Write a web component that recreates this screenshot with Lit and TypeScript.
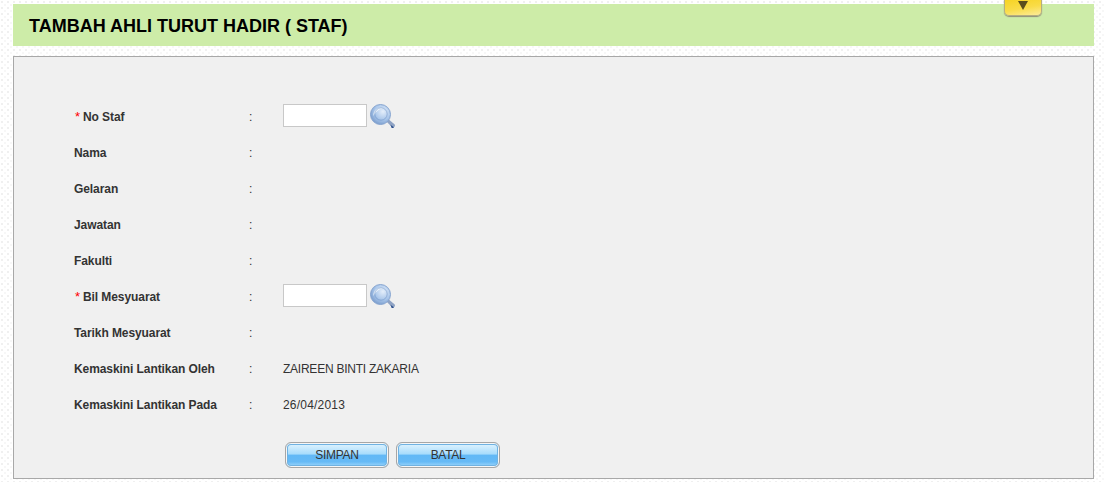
import { LitElement, html, css } from "lit";
import { customElement } from "lit/decorators.js";

const rows = [
  { label: "No Staf", required: true, lookup: true },
  { label: "Nama" },
  { label: "Gelaran" },
  { label: "Jawatan" },
  { label: "Fakulti" },
  { label: "Bil Mesyuarat", required: true, lookup: true },
  { label: "Tarikh Mesyuarat" },
  { label: "Kemaskini Lantikan Oleh", value: "ZAIREEN BINTI ZAKARIA" },
  { label: "Kemaskini Lantikan Pada", value: "26/04/2013", date: true },
] as { label: string; required?: boolean; lookup?: boolean; value?: string; date?: boolean }[];

const searchIcon = html`<svg class="icon" width="28" height="28" viewBox="0 0 28 28">
  <defs>
    <radialGradient id="lens" cx="0.62" cy="0.35" r="0.75">
      <stop offset="0" stop-color="#e4eefa"></stop>
      <stop offset="0.55" stop-color="#a9c6ea"></stop>
      <stop offset="1" stop-color="#6f93c6"></stop>
    </radialGradient>
  </defs>
  <path d="M16 17l2-2 7.5 6.2c.8.8.6 2-.2 2.7-.8.7-1.8.7-2.5 0z" fill="#8fa3c4"></path>
  <path d="M21.5 21.8l3.4 2.4c-.5.8-1.6 1.2-2.4.6z" fill="#2c4f8c"></path>
  <circle cx="11.5" cy="11.5" r="10" fill="url(#lens)" stroke="#87a5d0" stroke-width="1"></circle>
  <path d="M4.5 13c-.6-4 2.3-7.8 6.2-8.2 1.5-.1 2.8.2 3.8.9-3.7-.6-7.6 2.8-10 7.3z" fill="#f3f7fd" opacity="0.8"></path>
  <circle cx="12" cy="11" r="6.2" fill="none" stroke="#5f86bd" stroke-width="1" opacity="0.45"></circle>
</svg>`;

@customElement("app-root")
export class AppRoot extends LitElement {
  static styles = css`
    :host {
      display: block;
      height: 482px;
      overflow: hidden;
      box-sizing: border-box;
      padding: 4px 11px 0 13px;
      font-family: "Liberation Sans", Arial, sans-serif;
      font-size: 12px;
      color: #333;
      background-color: #fff;
      background-image: radial-gradient(circle at 2px 2px, #f0f0f0 1px, transparent 1.2px),
        radial-gradient(circle at 5px 5px, #f7f7f7 1px, transparent 1.2px);
      background-size: 6px 6px;
    }

    .title {
      position: relative;
      height: 42px;
      box-sizing: border-box;
      padding: 2px 0 0 16px;
      background: #cdeca8;
      display: flex;
      align-items: center;
      margin-bottom: 10px;
    }

    h1 {
      margin: 0;
      font-size: 18px;
      font-weight: bold;
      color: #000;
    }

    .toggle {
      position: absolute;
      top: -5px;
      right: 52px;
      width: 38px;
      height: 17px;
      box-sizing: border-box;
      border: 1px solid #b5ad80;
      border-top: 0;
      border-radius: 0 0 5px 5px;
      background: linear-gradient(170deg, #f6d321 0%, #f9dc48 55%, #fcec9a 100%);
      box-shadow: 0 1px 1px #8f8f78;
      display: flex;
      justify-content: center;
    }

    .toggle::after {
      content: "";
      margin-top: 2px;
      width: 0;
      height: 0;
      border-left: 5px solid transparent;
      border-right: 5px solid transparent;
      border-top: 9px solid #5a4e1c;
    }

    .panel {
      height: 423px;
      box-sizing: border-box;
      border: 1px solid #a8a8a8;
      background: #f0f0f0;
      padding: 42px 0 0 60px;
    }

    .row {
      display: grid;
      grid-template-columns: 175px 34px 1fr;
      align-items: center;
      height: 36px;
    }

    .label {
      font-weight: bold;
      position: relative;
      letter-spacing: -0.08px;
    }

    .star {
      position: absolute;
      left: 1px;
      top: -1px;
      color: #f00;
      font-weight: normal;
      font-size: 13px;
    }

    .label.req {
      padding-left: 9px;
    }

    .value {
      display: flex;
      align-items: center;
      letter-spacing: -0.24px;
    }

    .value.date {
      letter-spacing: 0.2px;
    }

    input {
      width: 84px;
      height: 23px;
      box-sizing: border-box;
      border: 1px solid #c8c8c8;
      background: #fff;
      padding: 0;
      margin: 0 0 3px;
    }

    .icon {
      margin-left: 2px;
    }

    .actions {
      display: flex;
      gap: 7px;
      padding: 19px 0 0 211px;
    }

    button {
      width: 104px;
      height: 26px;
      box-sizing: border-box;
      border: 1px solid #a6a6a6;
      border-radius: 6px;
      padding: 0;
      font-family: inherit;
      font-size: 12px;
      letter-spacing: -0.3px;
      color: #333;
      background: linear-gradient(#e4f5fe 0%, #a8dcfc 45%, #62b8f6 52%, #66baf6 78%, #a5dafb 100%);
      box-shadow: inset 0 0 0 1px #f6f6f6, inset 0 0 0 2px #6fb2e2;
    }
  `;

  render() {
    return html`
      <div class="title">
        <h1>TAMBAH AHLI TURUT HADIR ( STAF)</h1>
        <div class="toggle"></div>
      </div>
      <div class="panel">
        ${rows.map(
          (r) => html`<div class="row">
            <div class="label ${r.required ? "req" : ""}">
              ${r.required ? html`<span class="star">*</span>` : ""}${r.label}
            </div>
            <div>:</div>
            <div class="value ${r.date ? "date" : ""}">
              ${r.lookup ? html`<input type="text" />${searchIcon}` : (r.value ?? "")}
            </div>
          </div>`
        )}
        <div class="actions">
          <button>SIMPAN</button>
          <button>BATAL</button>
        </div>
      </div>
    `;
  }
}
